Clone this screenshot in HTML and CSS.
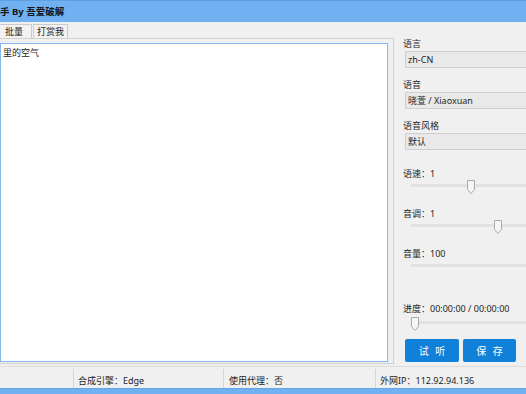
FILE: index.html
```html
<!DOCTYPE html>
<html lang="zh-CN">
<head>
  <meta charset="UTF-8">
  <title>语音助手 By 吾爱破解</title>
  <link rel="stylesheet" href="styles.css">
</head>
<body>
  <div class="window">
    <header class="titlebar"><span class="title">手 By 吾爱破解</span></header>

    <nav class="tabs">
      <div class="tab tab-first">批量</div>
      <div class="tab">打赏我</div>
    </nav>

    <div class="main">
      <section class="page">
        <div class="editor">里的空气</div>
      </section>

      <aside class="side">
        <div class="field">
          <div class="field-label">语言</div>
          <div class="select">zh-CN</div>
        </div>
        <div class="field">
          <div class="field-label">语音</div>
          <div class="select">晓萱 / Xiaoxuan</div>
        </div>
        <div class="field">
          <div class="field-label">语音风格</div>
          <div class="select">默认</div>
        </div>

        <div class="slider-group first">
          <div class="field-label">语速：1</div>
          <div class="slider">
            <div class="track"></div>
            <svg class="thumb" style="left:56px" width="8" height="14" viewBox="0 0 8 14"><path d="M0.5 0.5H7.5V9.5L4 13.5L0.5 9.5Z"/></svg>
          </div>
        </div>
        <div class="slider-group">
          <div class="field-label">音调：1</div>
          <div class="slider">
            <div class="track"></div>
            <svg class="thumb" style="left:83px" width="8" height="14" viewBox="0 0 8 14"><path d="M0.5 0.5H7.5V9.5L4 13.5L0.5 9.5Z"/></svg>
          </div>
        </div>
        <div class="slider-group">
          <div class="field-label">音量：100</div>
          <div class="slider">
            <div class="track"></div>
            <svg class="thumb" style="left:160px" width="8" height="14" viewBox="0 0 8 14"><path d="M0.5 0.5H7.5V9.5L4 13.5L0.5 9.5Z"/></svg>
          </div>
        </div>

        <div class="slider-group progress">
          <div class="field-label">进度：00:00:00 / 00:00:00</div>
          <div class="slider">
            <div class="track"></div>
            <svg class="thumb" style="left:0px" width="8" height="14" viewBox="0 0 8 14"><path d="M0.5 0.5H7.5V9.5L4 13.5L0.5 9.5Z"/></svg>
          </div>
        </div>

        <div class="buttons">
          <button class="btn">试 听</button>
          <button class="btn btn-save">保 存</button>
        </div>
      </aside>
    </div>

    <footer class="statusbar">
      <div class="cell cell-first"></div>
      <div class="cell cell-engine">合成引擎：Edge</div>
      <div class="cell cell-proxy">使用代理：否</div>
      <div class="cell cell-ip">外网IP：112.92.94.136</div>
    </footer>
    <div class="bottombar"></div>
  </div>
</body>
</html>
```

FILE: styles.css
```css
:root {
  --win-blue: #71b1f2;
  --win-bg: #f0f0f0;
  --text: #1e1e1e;
  --frame: #d2d2d2;
  --btn-blue: #1180d9;
}
* { box-sizing: border-box; margin: 0; padding: 0; }
body {
  font-family: "Noto Sans", "Noto Sans CJK SC", sans-serif;
  font-size: 9px;
  color: var(--text);
  background: var(--win-bg);
}
.window {
  width: 526px;
  height: 394px;
  overflow: hidden;
  display: flex;
  flex-direction: column;
  background: var(--win-bg);
}

/* title bar */
.titlebar {
  height: 22px;
  flex-shrink: 0;
  background: var(--win-blue);
  border-top: 1px solid #5e9fe4;
  display: flex;
  align-items: center;
}
.title {
  font-weight: bold;
  font-size: 9.5px;
  line-height: 11px;
  color: #141414;
}

/* tabs */
.tabs {
  height: 16px;
  flex-shrink: 0;
  display: flex;
  align-items: flex-end;
}
.tab {
  height: 14px;
  width: 35px;
  margin-left: 1px;
  border: 1px solid #cbcbcb;
  border-bottom: none;
  background: #f2f2f2;
  line-height: 13px;
  text-align: center;
}
.tab-first {
  width: 36px;
  margin-left: -4px;
}

/* main */
.main {
  height: 328px;
  flex-shrink: 0;
  display: flex;
  align-items: flex-start;
}
.page {
  width: 399px;
  height: 326px;
  margin-left: -5px;
  flex-shrink: 0;
  border: 1px solid var(--frame);
  padding: 4px 5px 1px 4px;
}
.editor {
  height: 319px;
  background: #fff;
  border: 1px solid #86b8ec;
  padding: 3px 2px;
  line-height: 11px;
}

.side {
  flex: 1;
  min-width: 0;
  padding-left: 9px;
}
.field { margin-bottom: 11px; }
.field-label {
  line-height: 11px;
  white-space: nowrap;
}
.select {
  width: 150px;
  height: 17px;
  margin-top: 2px;
  margin-left: 2px;
  background: #e9e9e9;
  border: 1px solid #cfcfcf;
  padding-left: 2px;
  line-height: 15px;
  white-space: nowrap;
}

/* sliders */
.slider-group { margin-top: 15px; }
.slider-group.first { margin-top: 18px; }
.slider-group.progress { margin-top: 30px; }
.slider {
  position: relative;
  width: 150px;
  height: 14px;
  margin-left: 8px;
}
.progress .slider {
  margin-top: 2px;
}
.track {
  position: absolute;
  left: 0;
  right: 0;
  top: 5px;
  height: 3px;
  background: #e2e2e2;
  border-radius: 1px;
}
.thumb {
  position: absolute;
  top: 1px;
}
.thumb path {
  fill: #f5f5f5;
  stroke: #a9a9a9;
  stroke-width: 1;
}

/* buttons */
.buttons {
  display: flex;
  gap: 4px;
  margin-top: 9px;
  margin-left: 2px;
}
.btn {
  width: 54px;
  height: 23px;
  border: none;
  border-radius: 2px;
  background: var(--btn-blue);
  color: #fff;
  font-family: inherit;
  font-size: 10px;
  letter-spacing: 2px;
  padding-left: 2px;
}
.btn-save { width: 53px; }

/* status bar */
.statusbar {
  height: 22px;
  flex-shrink: 0;
  display: flex;
  border-top: 1px solid #dddddd;
  white-space: nowrap;
}
.cell {
  margin-top: 2px;
  height: 19px;
  padding: 6px 0 0 4px;
  line-height: 11px;
}
.cell-first { width: 73px; }
.cell-engine,
.cell-proxy,
.cell-ip { border-left: 1px solid #d6d6d6; }
.cell-engine { width: 150px; }
.cell-proxy { width: 152px; padding-left: 5px; }
.cell-ip { flex: 1; }

.bottombar {
  height: 6px;
  flex-shrink: 0;
  background: var(--win-blue);
  border-top: 1px solid #64a5ea;
}
```
